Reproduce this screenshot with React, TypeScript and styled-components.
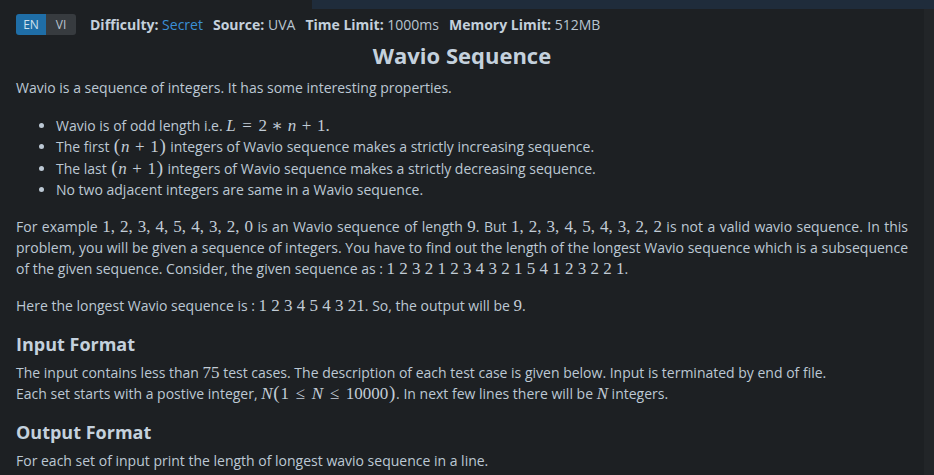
import React from "react";
import styled, { createGlobalStyle } from "styled-components";

const Global = createGlobalStyle`
  html, body { margin: 0; padding: 0; background: #1d2023; }
  body { font-family: "Open Sans", "Noto Sans", sans-serif; color: #bcc8d4; font-size: 14px; }
  * { box-sizing: border-box; }
`;

const Shell = styled.div`
  display: flex;
  flex-direction: column;
  width: 934px;
  height: 475px;
  overflow: hidden;
  background: #1d2023;
`;

const Body = styled.div`
  flex: 1;
  display: flex;
  min-height: 0;
`;

const Main = styled.div`
  flex: 1;
  display: flex;
  flex-direction: column;
  min-width: 0;
`;

const ScrollTrack = styled.div`
  width: 10px;
  background: #222528;
`;

const TopStrip = styled.div`
  height: 9px;
  margin-left: 312px;
  background: #1f2c3b;
`;

const Content = styled.div`
  padding: 0 16px;
`;

const MetaRow = styled.div`
  display: flex;
  align-items: center;
  margin-top: 4px;
  height: 22px;
  gap: 14px;
`;

const Toggle = styled.div`
  display: flex;
  border-radius: 3px;
  overflow: hidden;
  height: 21px;
`;

const ToggleBtn = styled.span<{ $active?: boolean }>`
  width: 30px;
  display: flex;
  align-items: center;
  justify-content: center;
  font-size: 12px;
  color: ${(p) => (p.$active ? "#cfe0ee" : "#b9c4cf")};
  background: ${(p) => (p.$active ? "#1f6ea7" : "#373b3f")};
`;

const Meta = styled.div`
  display: flex;
  gap: 10px;
  font-size: 14px;
  color: #b8c4d0;
`;

const MetaItem = styled.span``;

const MetaLabel = styled.b`
  font-weight: 700;
  color: #c4d0dc;
`;

const MetaValue = styled.span<{ $accent?: boolean }>`
  color: ${(p) => (p.$accent ? "#3b8fd6" : "#b8c4d0")};
`;

const Title = styled.h1`
  margin: 6px 0 0;
  text-align: center;
  font-size: 22px;
  line-height: 28px;
  font-weight: 700;
  color: #c4d1dd;
`;

const Para = styled.p<{ $justify?: boolean; $top?: number }>`
  margin: ${(p) => p.$top ?? 0}px 0 0;
  line-height: 21px;
  text-align: ${(p) => (p.$justify ? "justify" : "left")};
`;

const List = styled.ul`
  margin: 17px 0 0;
  padding-left: 40px;
  line-height: 21.3px;
`;

const Heading = styled.h2`
  margin: 15px 0 5px;
  font-size: 18px;
  line-height: 26px;
  font-weight: 700;
  color: #c4d1dd;
`;

const M = styled.span`
  font-family: "Liberation Serif", "DejaVu Serif", serif;
  font-size: 17px;
  line-height: 1;
  color: #c2ccd6;
`;

const V = styled.i`
  font-style: italic;
`;

const Paren = styled.span`
  font-size: 1.12em;
  margin: 0 0.04em;
`;

const Op = styled.span<{ $rel?: boolean }>`
  display: inline-block;
  width: 0.78em;
  text-align: center;
  margin: 0 ${(p) => (p.$rel ? "0.28em" : "0.22em")};
`;

const App: React.FC = () => (
  <>
    <Global />
    <Shell>
      <TopStrip />
      <Body>
        <Main>
          <Content>
            <MetaRow>
              <Toggle>
                <ToggleBtn $active>EN</ToggleBtn>
                <ToggleBtn>VI</ToggleBtn>
              </Toggle>
              <Meta>
                <MetaItem>
                  <MetaLabel>Difficulty:</MetaLabel> <MetaValue $accent>Secret</MetaValue>
                </MetaItem>
                <MetaItem>
                  <MetaLabel>Source:</MetaLabel> <MetaValue>UVA</MetaValue>
                </MetaItem>
                <MetaItem>
                  <MetaLabel>Time Limit:</MetaLabel> <MetaValue>1000ms</MetaValue>
                </MetaItem>
                <MetaItem>
                  <MetaLabel>Memory Limit:</MetaLabel> <MetaValue>512MB</MetaValue>
                </MetaItem>
              </Meta>
            </MetaRow>
            <Title>Wavio Sequence</Title>
            <Para $top={8}>Wavio is a sequence of integers. It has some interesting properties.</Para>
            <List>
              <li>
                Wavio is of odd length i.e.{" "}
                <M>
                  <V>L</V>
                  <Op $rel>=</Op>2<Op>∗</Op>
                  <V>n</V>
                  <Op>+</Op>1.
                </M>
              </li>
              <li>
                The first{" "}
                <M>
                  <Paren>(</Paren>
                  <V>n</V>
                  <Op>+</Op>1<Paren>)</Paren>
                </M>{" "}
                integers of Wavio sequence makes a strictly increasing sequence.
              </li>
              <li>
                The last{" "}
                <M>
                  <Paren>(</Paren>
                  <V>n</V>
                  <Op>+</Op>1<Paren>)</Paren>
                </M>{" "}
                integers of Wavio sequence makes a strictly decreasing sequence.
              </li>
              <li>No two adjacent integers are same in a Wavio sequence.</li>
            </List>
            <Para $justify $top={16}>
              For example <M>1, 2, 3, 4, 5, 4, 3, 2, 0</M> is an Wavio sequence of length <M>9</M>. But{" "}
              <M>1, 2, 3, 4, 5, 4, 3, 2, 2</M> is not a valid wavio sequence. In this problem, you will be given a
              sequence of integers. You have to find out the length of the longest Wavio sequence which is a
              subsequence of the given sequence. Consider, the given sequence as :{" "}
              <M>1 2 3 2 1 2 3 4 3 2 1 5 4 1 2 3 2 2 1</M>.
            </Para>
            <Para $top={16}>
              Here the longest Wavio sequence is : <M>1 2 3 4 5 4 3 21</M>. So, the output will be <M>9</M>.
            </Para>
            <Heading>Input Format</Heading>
            <Para>
              The input contains less than <M>75</M> test cases. The description of each test case is given below.
              Input is terminated by end of file.
              <br />
              Each set starts with a postive integer,{" "}
              <M>
                <V>N</V>
                <Paren>(</Paren>1<Op $rel>≤</Op>
                <V>N</V>
                <Op $rel>≤</Op>10000<Paren>)</Paren>
              </M>
              . In next few lines there will be <M><V>N</V></M> integers.
            </Para>
            <Heading>Output Format</Heading>
            <Para>For each set of input print the length of longest wavio sequence in a line.</Para>
          </Content>
        </Main>
        <ScrollTrack />
      </Body>
    </Shell>
  </>
);

export default App;
